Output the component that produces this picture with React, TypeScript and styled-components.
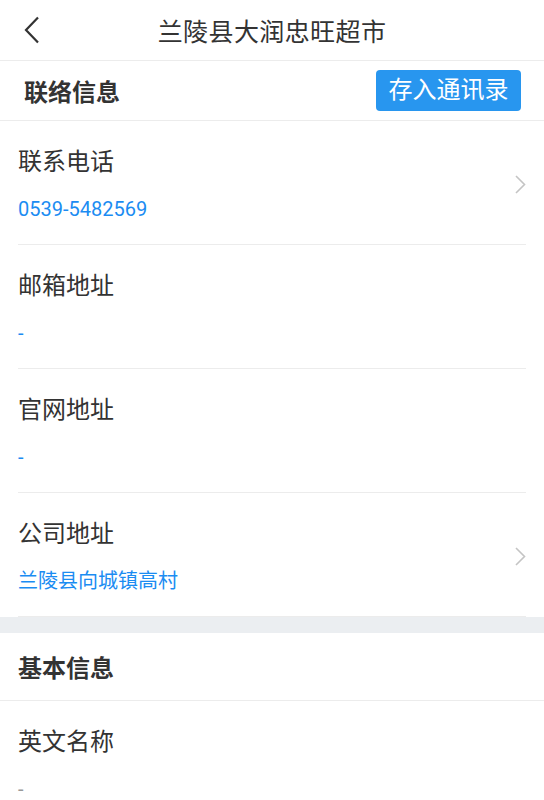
import * as React from 'react'
import styled, { createGlobalStyle } from 'styled-components'

const GlobalStyle = createGlobalStyle`
    html, body {
        margin: 0;
        padding: 0;
        background: #ffffff;
    }
    body {
        font-family: Roboto, "Noto Sans CJK SC", sans-serif;
        color: #333333;
    }
`

const CONTACTS = [
    { label: '联系电话', value: '0539-5482569', link: true },
    { label: '邮箱地址', value: '-', link: false },
    { label: '官网地址', value: '-', link: false },
    { label: '公司地址', value: '兰陵县向城镇高村', link: true },
]

const BASIC = [
    { label: '英文名称', value: '-' },
]

const Page = styled.div`
    width: 544px;
    min-height: 800px;
    background: #ffffff;
`

const NavBar = styled.header`
    position: relative;
    height: 60px;
    display: flex;
    align-items: center;
    justify-content: center;
    border-bottom: 1px solid #ececec;
`

const BackButton = styled.button`
    position: absolute;
    left: 18px;
    top: 14px;
    width: 28px;
    height: 32px;
    padding: 0;
    border: none;
    background: none;
    display: flex;
    align-items: center;
    justify-content: center;
`

const Title = styled.h1`
    margin: 0;
    font-size: 25px;
    font-weight: 400;
    color: #333333;
    letter-spacing: 0.4px;
`

const SectionHead = styled.div<{ $inset: number; $height: number }>`
    height: ${p => p.$height}px;
    padding: 0 23px 0 ${p => p.$inset}px;
    display: flex;
    align-items: center;
    justify-content: space-between;
    border-bottom: 1px solid #ececec;
`

const SectionTitle = styled.h2`
    margin: 0;
    font-size: 24px;
    font-weight: 700;
    color: #333333;
`

const SaveButton = styled.button`
    width: 145px;
    height: 41px;
    padding: 0;
    border: none;
    border-radius: 4px;
    background: #2896ef;
    color: #ffffff;
    font-family: inherit;
    font-size: 24px;
    line-height: 41px;
`

const List = styled.div`
    padding: 0 18px;
`

const Row = styled.div`
    display: flex;
    align-items: center;
    padding: 25px 0 21px;
    border-bottom: 1px solid #ececec;
`

const RowText = styled.div`
    flex: 1;
    display: flex;
    flex-direction: column;
    gap: 17px;
`

const Label = styled.div`
    font-size: 24px;
    line-height: 32px;
    color: #333333;
`

const Value = styled.div<{ $muted?: boolean }>`
    font-size: 20px;
    line-height: 28px;
    color: ${p => (p.$muted ? '#999999' : '#1b8cf2')};
`

const Band = styled.div`
    height: 16px;
    background: #ebeef1;
`

const BackIcon = () => (
    <svg width="16" height="28" viewBox="0 0 16 28">
        <path d="M14 1.5 L2 14 L14 26.5" fill="none" stroke="#333333" strokeWidth="2.2" strokeLinejoin="miter" />
    </svg>
)

const ChevronIcon = () => (
    <svg width="11" height="19" viewBox="0 0 11 19">
        <path d="M1 1 L9.5 9.5 L1 18" fill="none" stroke="#c4c4c4" strokeWidth="1.6" />
    </svg>
)

const App = () => {
    return (
        <Page>
            <GlobalStyle />
            <NavBar>
                <BackButton aria-label="返回"><BackIcon /></BackButton>
                <Title>兰陵县大润忠旺超市</Title>
            </NavBar>

            <SectionHead $inset={24} $height={59}>
                <SectionTitle>联络信息</SectionTitle>
                <SaveButton>存入通讯录</SaveButton>
            </SectionHead>
            <List>
                {CONTACTS.map(({ label, value, link }) => (
                    <Row key={label}>
                        <RowText>
                            <Label>{label}</Label>
                            <Value>{value}</Value>
                        </RowText>
                        {link && <ChevronIcon />}
                    </Row>
                ))}
            </List>

            <Band />

            <SectionHead $inset={18} $height={67}>
                <SectionTitle>基本信息</SectionTitle>
            </SectionHead>
            <List>
                {BASIC.map(({ label, value }) => (
                    <Row key={label}>
                        <RowText>
                            <Label>{label}</Label>
                            <Value $muted>{value}</Value>
                        </RowText>
                    </Row>
                ))}
            </List>
        </Page>
    )
}

export default App
